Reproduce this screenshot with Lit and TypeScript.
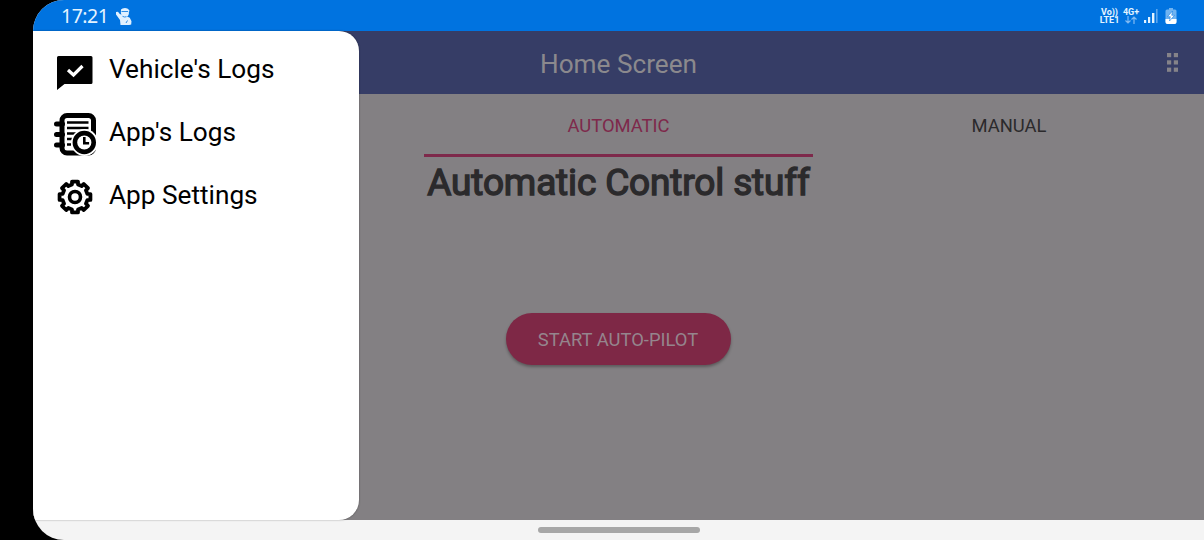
import { LitElement, html, css, svg } from "lit";
import { customElement } from "lit/decorators.js";

const logsIcon = svg`<path d="M1.500 0H34a1.500 1.500 0 0 1 1.500 1.500V26.500a1.500 1.500 0 0 1-1.500 1.500H7.500L0 34V1.500A1.500 1.500 0 0 1 1.500 0Z" fill="#000"/><path d="M11 14l5.500 5L25.500 10" fill="none" stroke="#fff" stroke-width="3.200"/>`;

const appLogsIcon = svg`
  <rect x="8" y="2.500" width="31.500" height="37.500" rx="5" fill="#fff" stroke="#000" stroke-width="5"/>
  <path d="M2.500 11h6M2.500 21.500h6M2.500 32h6" stroke="#000" stroke-width="5" stroke-linecap="round"/>
  <path d="M13 9.500h21.500M13 15h21.500M13 20.500h11M13 26h5M13 31.500h4" stroke="#000" stroke-width="2.600"/>
  <circle cx="30.500" cy="29.500" r="13.500" fill="#fff"/>
  <circle cx="30.300" cy="29.500" r="9.400" fill="#fff" stroke="#000" stroke-width="4.600"/>
  <path d="M30.300 24v6.300h4.800" fill="none" stroke="#000" stroke-width="2.600"/>`;

const gearPath = (() => {
  const teeth = 8;
  const pts: string[] = [];
  for (let i = 0; i < teeth; i++) {
    const mid = (i * 2 * Math.PI) / teeth - Math.PI / 2;
    for (const [offset, r] of [[-0.24, 12.8], [-0.19, 15.7], [0.19, 15.7], [0.24, 12.8]]) {
      pts.push(`${(18 + r * Math.cos(mid + offset)).toFixed(2)} ${(18 + r * Math.sin(mid + offset)).toFixed(2)}`);
    }
  }
  return `M${pts.join("L")}Z`;
})();

const gearIcon = svg`<path d=${gearPath} fill="none" stroke="#000" stroke-width="3.800" stroke-linejoin="round"/><circle cx="18" cy="18" r="5.500" fill="none" stroke="#000" stroke-width="3.600"/>`;

@customElement("status-bar")
class StatusBar extends LitElement {
  static styles = css`
    :host { display: flex; height: 31px; background: #0073e0; color: #e4f3ff; box-sizing: border-box; padding-left: 28px; font-family: Roboto, sans-serif; }
    .time { font: 19.500px/32px "Noto Sans", sans-serif; width: 47px; white-space: nowrap; letter-spacing: -0.500px; }
    .person { margin: 8px 0 0 8px; }
    .space { flex: 1; }
    .net { font-weight: 700; font-size: 9px; line-height: 8px; text-align: center; padding-top: 8px; white-space: nowrap; }
    .lte { width: 21px; margin-right: 2px; }
    .gen { width: 18px; margin-right: 1px; }
    .net svg { display: block; margin: 0 auto; }
    .signal { margin: 8px 0 0 3px; }
    .battery { margin: 8px 27px 0 6px; }
  `;
  render() {
    return html`
      <span class="time">17:21</span>
      <svg class="person" width="16" height="18" viewBox="0 0 16 18" fill="#e0f0ff">
        <path d="M5 1.500Q6 0 9 0q3 0 3.500 1.500L13.300 2v1.500h-.5Q13.500 7 11 8.500l2.800 1.300 1.700 3.400-.3 3.300-2 .5H4.500L4 12 0 6.500V4l2-.3 1.500 2 2 1Q4.500 5 5 1.500Z"/>
        <path d="M5.500 3.500h6.500M6.500 8.300q2 1.200 4 .4M11.500 12.500l-1.500 2.500" fill="none" stroke="#0073e0" stroke-width=".8"/>
      </svg>
      <span class="space"></span>
      <div class="net lte">Vo))<br />LTE1</div>
      <div class="net gen">4G+
        <svg width="12" height="8" viewBox="0 0 12 8" fill="none" stroke="#80baf2" stroke-width="1.200"><path d="M3 0v7M.5 4.500L3 7l2.500-2.500M9 8V1M6.500 3.500L9 1l2.500 2.500"/></svg>
      </div>
      <svg class="signal" width="15" height="16" viewBox="0 0 15 16" fill="#e4f3ff">
        <rect x="0" y="12" width="2.200" height="3"/><rect x="4" y="9" width="2.200" height="6"/><rect x="8" y="5" width="2.400" height="10"/><rect x="12" y="1" width="1.600" height="14" fill="#5ba6ed"/>
      </svg>
      <svg class="battery" width="12" height="17" viewBox="0 0 12 17">
        <path d="M4 0h4v1.500h2q1.500 0 1.500 1.500v11q0 2-2 2h-7q-2 0-2-2V3Q.5 1.500 2 1.500h2Z" fill="#70b3f1"/>
        <path d="M.5 11h11v3q0 2-2 2h-7q-2 0-2-2Z" fill="#fff"/>
        <path d="M7.500 3L2.500 8.700h2.800L4.500 13 9.500 7.300H6.700Z" fill="#fff" stroke="#0073e0" stroke-width=".5"/>
      </svg>`;
  }
}

@customElement("side-drawer")
class SideDrawer extends LitElement {
  static styles = css`
    :host { display: flex; flex-direction: column; box-sizing: border-box; padding-top: 7px; background: #fff; border-radius: 0 20px 20px 0; box-shadow: 0 0 2px rgba(0, 0, 0, 0.4); color: #000; font: 26.200px/63px Roboto, sans-serif; }
    .item { display: flex; height: 63px; white-space: nowrap; }
    .icon { width: 76px; flex: none; display: flex; }
    .label { line-height: 62px; }
    .vehicle { margin: 18px 0 0 24px; }
    .app { margin: 12px 0 0 21px; }
    .gear { margin: 15px 0 0 23.500px; }
  `;
  render() {
    return html`
      <div class="item"><span class="icon"><svg class="vehicle" width="36" height="34" viewBox="0 0 36 34">${logsIcon}</svg></span><span class="label">Vehicle's Logs</span></div>
      <div class="item"><span class="icon"><svg class="app" width="43" height="43" viewBox="0 0 43 43">${appLogsIcon}</svg></span><span class="label">App's Logs</span></div>
      <div class="item"><span class="icon"><svg class="gear" width="36" height="36" viewBox="0 0 36 36">${gearIcon}</svg></span><span class="label">App Settings</span></div>`;
  }
}

@customElement("app-root")
class AppRoot extends LitElement {
  static styles = css`
    :host { display: block; width: 1204px; height: 540px; box-sizing: border-box; padding-left: 33px; background: #000; overflow: hidden; font-family: Roboto, sans-serif; }
    .phone { display: flex; flex-direction: column; height: 540px; border-radius: 31px 0 0 31px; overflow: hidden; background: #f4f4f4; }
    .screen { position: relative; height: 489px; background: #838083; display: flex; flex-direction: column; }
    side-drawer { position: absolute; left: 0; top: 0; width: 326px; height: 489px; }
    .header { height: 63px; background: #363d66; display: grid; grid-template-columns: 1fr auto 1fr; color: #8b898d; font-size: 26.200px; line-height: 66px; white-space: nowrap; }
    .title { grid-column: 2; }
    .menu { justify-self: end; margin: 22px 26px 0 0; }
    .tabs { display: grid; grid-template-columns: 391px 389px 391px; height: 63px; font-size: 18.400px; line-height: 64px; text-align: center; color: #2b2a2c; }
    .tab { box-sizing: border-box; height: 63px; }
    .tab:last-child { padding-left: 1px; }
    .active { color: #7e294b; border-bottom: 3px solid #7e294b; }
    .heading { margin: 0; text-align: center; font-weight: 400; font-size: 37px; line-height: 51px; letter-spacing: -0.150px; color: #2b2a2c; -webkit-text-stroke: 1.400px #2b2a2c; white-space: nowrap; }
    .start { align-self: center; margin: 105px 1px 0 0; width: 225px; height: 52px; border: 0; border-radius: 26px; padding: 1px 0 0; background: #7e2846; color: #95858d; font: 18.400px/51px Roboto, sans-serif; box-shadow: 0 2px 3px rgba(0, 0, 0, 0.3); white-space: nowrap; }
    .nav { flex: 1; display: flex; justify-content: center; align-items: center; }
    .pill { width: 162px; height: 6px; border-radius: 3px; background: #a7a7a7; }
  `;
  render() {
    return html`
      <div class="phone">
        <status-bar></status-bar>
        <div class="screen">
          <div class="header">
            <span class="title">Home Screen</span>
            <svg class="menu" width="11" height="19" viewBox="0 0 11 19" fill="#858389">
              ${[0, 7.3, 14.6].map((y) => svg`<rect x="0" y=${y} width="4.200" height="4.200"/><rect x="6.800" y=${y} width="4.200" height="4.200"/>`)}
            </svg>
          </div>
          <div class="tabs"><span></span><span class="tab active">AUTOMATIC</span><span class="tab">MANUAL</span></div>
          <h1 class="heading">Automatic Control stuff</h1>
          <button class="start">START AUTO-PILOT</button>
          <side-drawer></side-drawer>
        </div>
        <div class="nav"><div class="pill"></div></div>
      </div>`;
  }
}
